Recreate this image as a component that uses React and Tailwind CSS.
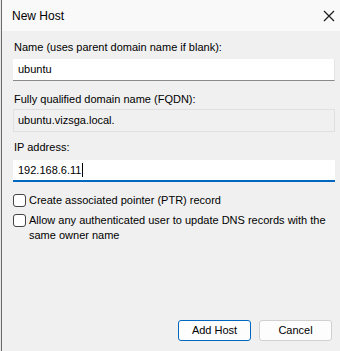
import React from "react";

export default function App() {
  const font = { fontFamily: '"Liberation Sans", Arial, sans-serif' };
  return (
    <div className="w-[340px] h-[351px] bg-[#f0f0f0] flex text-[11px] text-black" style={font}>
      <div className="w-[2px] bg-[#e8e8e8] border-r border-[#6b6b6b]" />
      <div className="flex-1 flex flex-col">
        <div className="h-[31px] bg-[#f9f9f9] flex items-center justify-between pl-[10px] pr-[4px]">
          <span className="text-[12px]">New Host</span>
          <svg width="14" height="14" viewBox="0 0 14 14">
            <path d="M2 2 L12 12 M12 2 L2 12" stroke="#1a1a1a" strokeWidth="1.2" fill="none" />
          </svg>
        </div>
        <div className="flex-1 flex flex-col pl-[11px] pr-[5px] pt-[9px]">
          <div className="leading-[15px] pl-[1px]">Name (uses parent domain name if blank):</div>
          <div className="mt-[4px] h-[22px] bg-white border-b border-[#8a8a8a] border-r border-r-[#e6e6e6] flex items-center pl-[5px]">ubuntu</div>
          <div className="mt-[11px] leading-[15px] pl-[1px]">Fully qualified domain name (FQDN):</div>
          <div className="mt-[2px] h-[23px] bg-[#f0f0f0] border border-[#e0e0e0] flex items-center pl-[4px]">ubuntu.vizsga.local.</div>
          <div className="mt-[8px] leading-[15px] pl-[1px]">IP address:</div>
          <div className="mt-[5px] h-[22px] bg-white border-b-2 border-[#0067c0] flex items-center pl-[5px]">
            <span>192.168.6.11</span>
            <span className="inline-block w-[1px] h-[14px] bg-black ml-[1px]" />
          </div>
          <label className="mt-[11px] flex items-start gap-[3px]">
            <span className="mt-[1px] w-[13px] h-[13px] rounded-[3px] border border-[#444] bg-white shrink-0" />
            <span className="leading-[15px]">Create associated pointer (PTR) record</span>
          </label>
          <label className="mt-[5px] flex items-start gap-[3px]">
            <span className="mt-[1px] w-[13px] h-[13px] rounded-[3px] border border-[#444] bg-white shrink-0" />
            <span className="leading-[15px]">Allow any authenticated user to update DNS records with the same owner name</span>
          </label>
          <div className="flex-1" />
          <div className="flex justify-end gap-[8px] mb-[10px] mr-[3px]">
            <button className="w-[73px] h-[21px] bg-[#fdfdfd] border border-[#0067c0] rounded-[3px] text-[11px] leading-none">Add Host</button>
            <button className="w-[73px] h-[21px] bg-[#fdfdfd] border border-[#d0d0d0] rounded-[3px] text-[11px] leading-none">Cancel</button>
          </div>
        </div>
      </div>
    </div>
  );
}
